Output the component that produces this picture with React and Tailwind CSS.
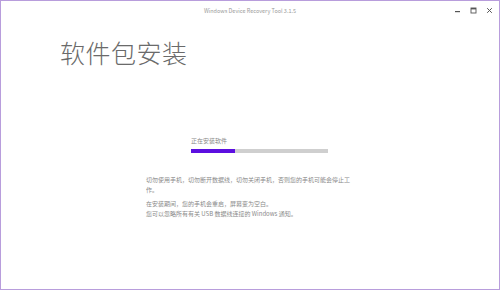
import React from 'react'

const font = { fontFamily: '"Noto Sans CJK SC", "Noto Sans", sans-serif' }

export default function App() {
  return (
    <div
      className="w-[500px] h-[290px] bg-white border border-[#b89ddc] flex flex-col overflow-hidden"
      style={font}
    >
      {/* Title bar */}
      <div className="relative h-[20px] flex items-center justify-center">
        <span className="text-[5.5px] text-[#9a9a9a] mt-[1px]">Windows Device Recovery Tool 3.1.5</span>
        <div className="absolute right-[6px] top-[6px] flex items-center gap-[9px]">
          <svg width="7" height="7" viewBox="0 0 7 7">
            <rect x="1" y="4" width="5" height="1.2" fill="#555" />
          </svg>
          <svg width="7" height="7" viewBox="0 0 7 7">
            <rect x="1" y="1" width="5" height="5" fill="none" stroke="#555" strokeWidth="0.9" />
            <rect x="1" y="1" width="5" height="1.4" fill="#555" />
          </svg>
          <svg width="7" height="7" viewBox="0 0 7 7">
            <path d="M1.2 1.2 L5.8 5.8 M5.8 1.2 L1.2 5.8" stroke="#555" strokeWidth="1" />
          </svg>
        </div>
      </div>

      {/* Heading */}
      <h1 className="ml-[59px] mt-[16px] text-[25px] leading-[30px] font-light text-[#6a6a6a] tracking-[0.5px]">
        软件包安装
      </h1>

      {/* Progress */}
      <div className="ml-[190px] mt-[70px] flex flex-col">
        <span className="text-[6px] leading-[8px] text-[#8a8a8a]">正在安装软件</span>
        <div className="mt-[4px] w-[137px] h-[4px] bg-[#cfcfcf]">
          <div className="h-full w-[44px] bg-[#5c0fe0]" />
        </div>
      </div>

      {/* Notes */}
      <div className="ml-[145px] mt-[22px] w-[207px] text-[6px] leading-[10px] text-[#8a8a8a]">
        <p>切勿使用手机，切勿断开数据线，切勿关闭手机，否则您的手机可能会停止工作。</p>
        <p className="mt-[4px]">在安装期间，您的手机会重启，屏幕变为空白。</p>
        <p>您可以忽略所有有关 USB 数据线连接的 Windows 通知。</p>
      </div>
    </div>
  )
}
